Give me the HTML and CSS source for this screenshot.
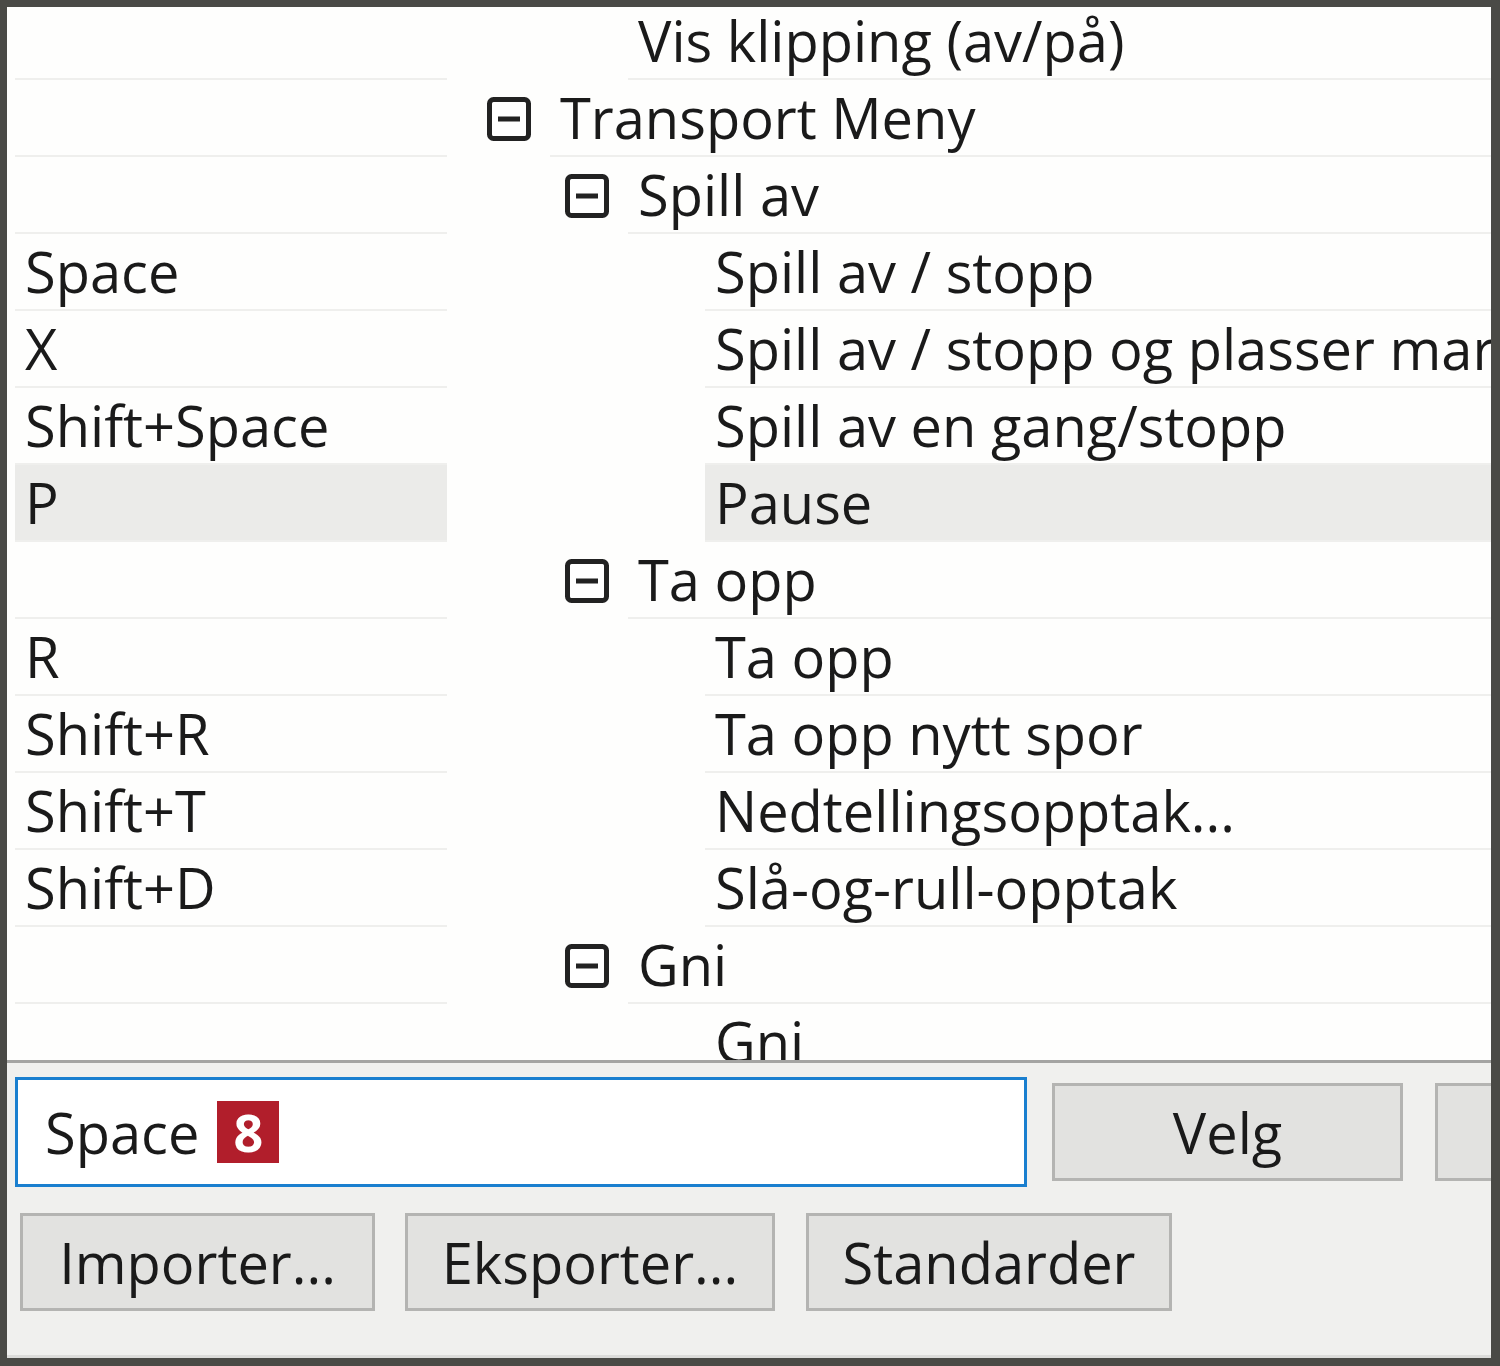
FILE: index.html
```html
<!DOCTYPE html>
<html lang="nb">
<head>
    <meta charset="UTF-8">
    <meta name="viewport" content="width=device-width, initial-scale=1.0">
    <title>Tastatur</title>
    <link rel="stylesheet" href="styles.css">
</head>
<body>
    <div id="frame">
        <!-- shortcut list -->
        <div class="list">
            <div class="rows">
                <div class="row">
                    <div class="key"></div>
                    <div class="node leaf2"><div class="label">Vis klipping (av/på)</div></div>
                </div>
                <div class="row">
                    <div class="key"></div>
                    <div class="node group1">
                        <span class="toggle"><svg viewBox="0 0 44 44" width="44" height="44"><rect x="2.5" y="2.5" width="39" height="39" rx="4" fill="#fff" stroke="#222" stroke-width="5"/><rect x="11" y="19.5" width="22" height="5" fill="#222"/></svg></span>
                        <div class="label">Transport Meny</div>
                    </div>
                </div>
                <div class="row">
                    <div class="key"></div>
                    <div class="node group2">
                        <span class="toggle"><svg viewBox="0 0 44 44" width="44" height="44"><rect x="2.5" y="2.5" width="39" height="39" rx="4" fill="#fff" stroke="#222" stroke-width="5"/><rect x="11" y="19.5" width="22" height="5" fill="#222"/></svg></span>
                        <div class="label">Spill av</div>
                    </div>
                </div>
                <div class="row">
                    <div class="key">Space</div>
                    <div class="node leaf3"><div class="label">Spill av / stopp</div></div>
                </div>
                <div class="row">
                    <div class="key">X</div>
                    <div class="node leaf3"><div class="label">Spill av / stopp og plasser markør</div></div>
                </div>
                <div class="row">
                    <div class="key">Shift+Space</div>
                    <div class="node leaf3"><div class="label">Spill av en gang/stopp</div></div>
                </div>
                <div class="row selected">
                    <div class="key">P</div>
                    <div class="node leaf3"><div class="label">Pause</div></div>
                </div>
                <div class="row">
                    <div class="key"></div>
                    <div class="node group2">
                        <span class="toggle"><svg viewBox="0 0 44 44" width="44" height="44"><rect x="2.5" y="2.5" width="39" height="39" rx="4" fill="#fff" stroke="#222" stroke-width="5"/><rect x="11" y="19.5" width="22" height="5" fill="#222"/></svg></span>
                        <div class="label">Ta opp</div>
                    </div>
                </div>
                <div class="row">
                    <div class="key">R</div>
                    <div class="node leaf3"><div class="label">Ta opp</div></div>
                </div>
                <div class="row">
                    <div class="key">Shift+R</div>
                    <div class="node leaf3"><div class="label">Ta opp nytt spor</div></div>
                </div>
                <div class="row">
                    <div class="key">Shift+T</div>
                    <div class="node leaf3"><div class="label">Nedtellingsopptak...</div></div>
                </div>
                <div class="row">
                    <div class="key">Shift+D</div>
                    <div class="node leaf3"><div class="label">Slå-og-rull-opptak</div></div>
                </div>
                <div class="row">
                    <div class="key"></div>
                    <div class="node group2">
                        <span class="toggle"><svg viewBox="0 0 44 44" width="44" height="44"><rect x="2.5" y="2.5" width="39" height="39" rx="4" fill="#fff" stroke="#222" stroke-width="5"/><rect x="11" y="19.5" width="22" height="5" fill="#222"/></svg></span>
                        <div class="label">Gni</div>
                    </div>
                </div>
                <div class="row">
                    <div class="key"></div>
                    <div class="node leaf3"><div class="label">Gni</div></div>
                </div>
            </div>
        </div>

        <!-- controls -->
        <div class="panel">
            <div class="line">
                <div class="input">Space <span class="badge">8</span></div>
                <button class="btn velg">Velg</button>
                <button class="btn more"></button>
            </div>
            <div class="line buttons">
                <button class="btn import">Importer...</button>
                <button class="btn export">Eksporter...</button>
                <button class="btn defaults">Standarder</button>
            </div>
        </div>
    </div>
</body>
</html>
```
FILE: styles.css
```css
html, body {
    margin: 0;
    padding: 0;
}
body {
    background: #4a4a46;
    font-family: "Open Sans", "Noto Sans", sans-serif;
    color: #1a1a1a;
}
#frame {
    box-sizing: border-box;
    width: 1500px;
    height: 1366px;
    border: 7px solid #4a4a46;
    border-right-width: 9px;
    border-bottom-width: 8px;
    border-radius: 4px;
    background: #f0f0ee;
    display: flex;
    flex-direction: column;
    overflow: hidden;
}
.list {
    height: 1053px;
    background: #fefefd;
    border-bottom: 3px solid #a4a4a2;
    overflow: hidden;
}
.rows {
    margin-top: -4px;
}
.row {
    display: flex;
    height: 77px;
    font-size: 56px;
    line-height: 75px;
    white-space: nowrap;
}
.key {
    width: 422px;
    margin-left: 8px;
    padding-left: 10px;
    border-bottom: 2px solid #efefed;
}
.node {
    flex: 1;
    display: flex;
    min-width: 0;
}
.label {
    flex: 1;
    min-width: 0;
    overflow: hidden;
    padding-left: 10px;
    border-bottom: 2px solid #efefed;
}
.toggle {
    display: flex;
    align-items: center;
    width: 44px;
    margin-right: 19px;
}
.group1 { padding-left: 40px; }
.group2 { padding-left: 118px; }
.leaf2 { padding-left: 181px; }
.leaf3 { padding-left: 258px; }

.selected .key,
.selected .label {
    background: #ebebe9;
}

.panel {
    flex: 1;
    padding: 14px 0 0 8px;
    border-bottom: 3px solid #dcdcda;
}
.line {
    display: flex;
    align-items: center;
    white-space: nowrap;
}
.input {
    box-sizing: border-box;
    flex-shrink: 0;
    width: 1012px;
    height: 110px;
    border: 3px solid #1a7fcf;
    background: #fff;
    padding-left: 27px;
    font-size: 56px;
    line-height: 100px;
    display: flex;
    align-items: center;
    gap: 18px;
}
.badge {
    display: inline-block;
    width: 62px;
    height: 62px;
    background: #b11e2b;
    color: #fff;
    font-weight: bold;
    font-size: 52px;
    line-height: 62px;
    text-align: center;
}
.btn {
    box-sizing: border-box;
    height: 98px;
    border: 3px solid #b4b4b2;
    background: #e2e2e0;
    font-family: inherit;
    font-size: 56px;
    color: #1a1a1a;
    padding: 0;
    flex-shrink: 0;
}
.velg {
    width: 351px;
    margin-left: 25px;
}
.more {
    width: 120px;
    margin-left: 32px;
}
.buttons {
    margin-top: 26px;
    padding-left: 5px;
}
.import { width: 355px; }
.export { width: 370px; margin-left: 30px; }
.defaults { width: 366px; margin-left: 31px; }
```
